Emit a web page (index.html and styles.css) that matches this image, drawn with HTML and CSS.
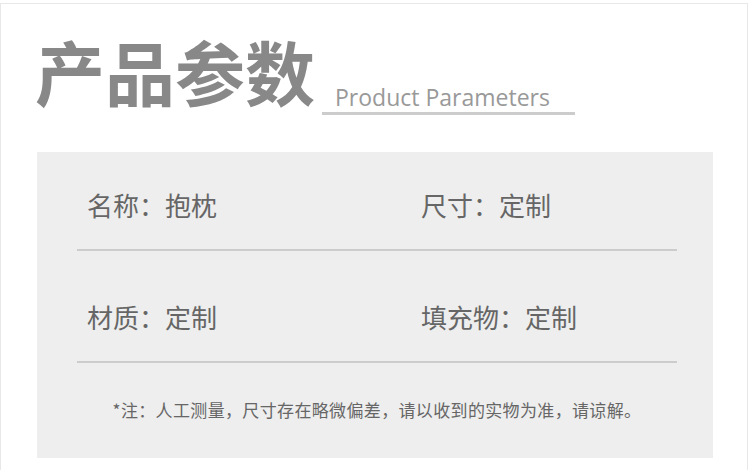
FILE: index.html
```html
<!DOCTYPE html>
<html lang="zh-CN">
<head>
    <meta charset="UTF-8">
    <meta name="viewport" content="width=device-width, initial-scale=1.0">
    <title>产品参数</title>
    <link rel="stylesheet" href="styles.css">
</head>
<body>
    <div class="sheet">
        <div class="heading">
            <h1 class="title">产品参数</h1>
            <div class="subtitle">Product Parameters</div>
        </div>

        <div class="panel">
            <div class="param-row">
                <p>名称：抱枕</p>
                <p>尺寸：定制</p>
            </div>
            <div class="param-row">
                <p>材质：定制</p>
                <p>填充物：定制</p>
            </div>
            <p class="note">*注：人工测量，尺寸存在略微偏差，请以收到的实物为准，请谅解。</p>
        </div>
    </div>
</body>
</html>
```

FILE: styles.css
```css
body {
    margin: 0;
    background-color: #fff;
    font-family: "Noto Sans CJK SC", "Noto Sans", sans-serif;
}
.sheet {
    margin: 3px 2px 0 0;
    height: 470px;
    border: 1px solid #e8e8e8;
    border-bottom: none;
}
.heading {
    display: flex;
    align-items: flex-end;
    padding: 32px 0 0 34px;
}
.title {
    margin: 0;
    font-size: 70px;
    line-height: 70px;
    font-weight: 700;
    color: #888;
}
.subtitle {
    margin: 0 0 -9px 7px;
    padding: 0 25px 2px 13px;
    border-bottom: 3px solid #ccc;
    font-family: "Open Sans", sans-serif;
    font-size: 23px;
    line-height: 26px;
    color: #999;
}
.panel {
    width: 676px;
    margin: 46px 0 0 36px;
    padding: 40px 36px 40px 40px;
    box-sizing: border-box;
    background-color: #eee;
}
.param-row {
    display: grid;
    grid-template-columns: 334px 1fr;
    padding: 53px 10px 31px;
    border-bottom: 2px solid #ccc;
}
.param-row:first-child {
    padding-top: 0;
}
.param-row p {
    margin: 0;
    font-size: 26px;
    line-height: 26px;
    color: #666;
}
.note {
    margin: 38px 0 0;
    text-align: center;
    font-size: 17px;
    line-height: 17px;
    letter-spacing: 0.35px;
    color: #666;
}
```
